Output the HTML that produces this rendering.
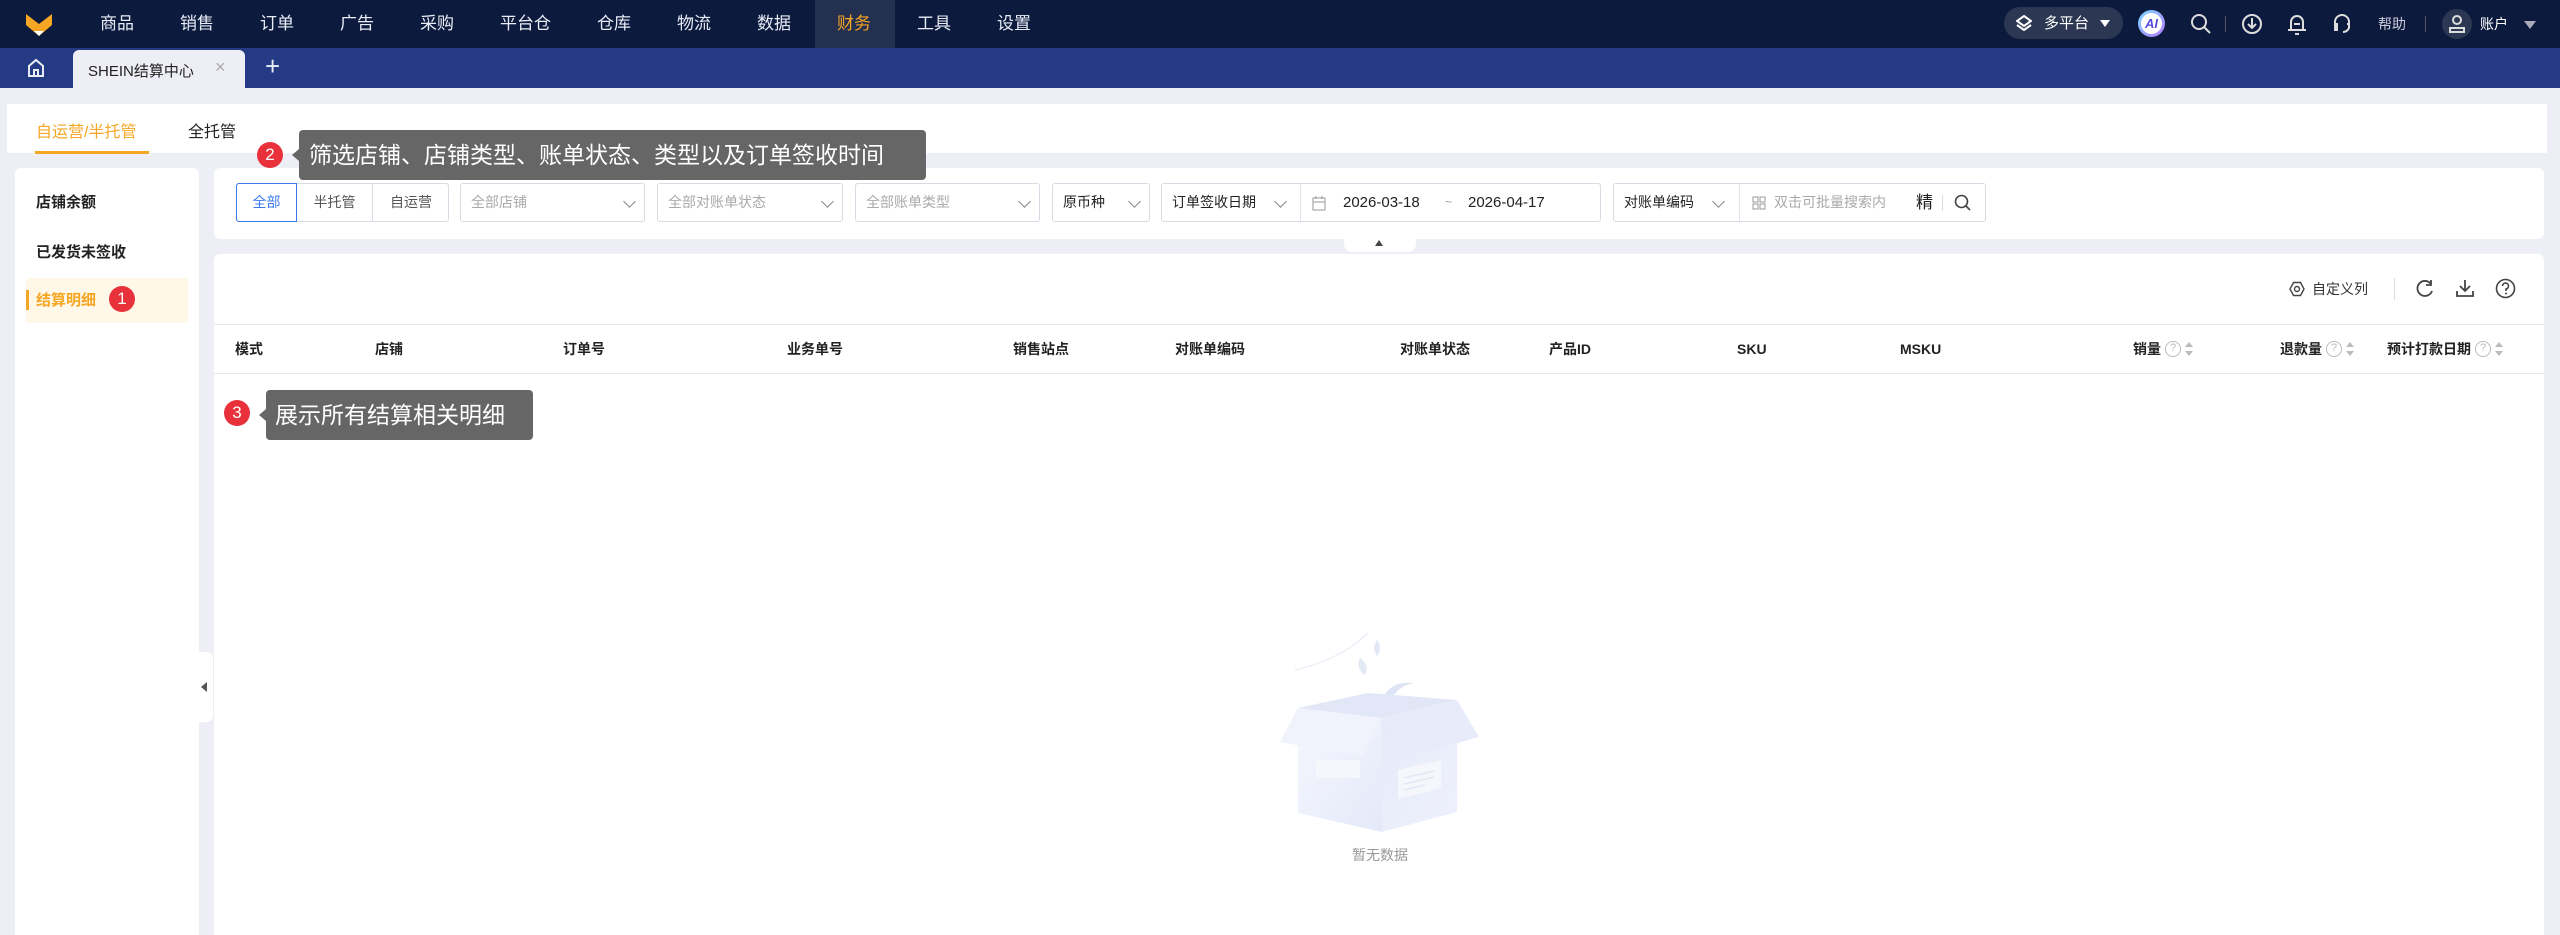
<!DOCTYPE html>
<html><head><meta charset="utf-8">
<style>
*{margin:0;padding:0;box-sizing:border-box}
body{width:2560px;height:935px;overflow:hidden;background:#eeeff6;font-family:"Liberation Sans","Noto Sans CJK SC",sans-serif;position:relative;color:#222}
.a{position:absolute}
.nav{left:0;top:0;width:2560px;height:48px;background:#0c1a3d}
.nav .m{position:absolute;top:0;height:48px;line-height:48px;color:#e8ecf5;font-size:17px}
.tabbar{left:0;top:48px;width:2560px;height:40px;background:#243a85}
.w{background:#fff}
.sel{position:absolute;top:183px;height:39px;border:1px solid #d8dbe3;border-radius:3px;background:#fff;font-size:14px;color:#aaa;line-height:37px;padding-left:10px}
.chev{position:absolute;right:10px;top:13px;width:9px;height:9px;border-right:1.5px solid #888;border-bottom:1.5px solid #888;transform:rotate(45deg)}
.th{position:absolute;top:340px;font-size:14px;font-weight:bold;color:#222;line-height:18px;display:flex;align-items:center}
.tip{position:absolute;background:#666;color:#fff;border-radius:4px;font-size:23px}
.badge{position:absolute;width:26px;height:26px;border-radius:50%;background:#e8313a;color:#fff;text-align:center;line-height:26px;font-size:17px}
.q{display:inline-block;width:16px;height:16px;border:1.5px solid #bbb;border-radius:50%;color:#bbb;font-size:11px;line-height:13px;text-align:center;font-weight:normal;margin-left:4px}
.sort{display:inline-block;width:8px;margin-left:4px}
</style></head><body>
<div class="a nav">
 <svg class="a" style="left:24px;top:11px" width="30" height="26" viewBox="0 0 30 26"><path d="M2 2 L15 12 L28 2 L28 14 L15 25 L2 14Z" fill="#f5a623"/><path d="M10 20 L15 25 L20 20Z" fill="#fff"/><path d="M2 2 L15 12 L28 2" stroke="#0c1a3d" stroke-width="1.5" fill="none"/></svg>
 <div class="m" style="left:100px">商品</div>
 <div class="m" style="left:180px">销售</div>
 <div class="m" style="left:260px">订单</div>
 <div class="m" style="left:340px">广告</div>
 <div class="m" style="left:420px">采购</div>
 <div class="m" style="left:500px">平台仓</div>
 <div class="m" style="left:597px">仓库</div>
 <div class="m" style="left:677px">物流</div>
 <div class="m" style="left:757px">数据</div>
 <div class="a" style="left:815px;top:0;width:80px;height:48px;background:#24304f"></div>
 <div class="m" style="left:837px;color:#f5a623">财务</div>
 <div class="m" style="left:917px">工具</div>
 <div class="m" style="left:997px">设置</div>
 <div class="a" style="left:2004px;top:7px;width:119px;height:32px;border-radius:16px;background:#2b3753"></div>
 <svg class="a" style="left:2016px;top:15px" width="16" height="16" viewBox="0 0 16 16"><path d="M8 1 L15 6 L8 11 L1 6Z M1 10 L8 15 L15 10" stroke="#fff" stroke-width="2" fill="none"/></svg>
 <div class="a" style="left:2044px;top:12px;color:#fff;font-size:15px">多平台</div>
 <div class="a" style="left:2100px;top:20px;border-left:5px solid transparent;border-right:5px solid transparent;border-top:7px solid #fff"></div>
 <div class="a" style="left:2138px;top:10px;width:27px;height:27px;border-radius:50%;background:linear-gradient(135deg,#7bd8ff,#b37bff);"></div>
 <div class="a" style="left:2141px;top:13px;width:21px;height:21px;border-radius:50%;background:#fff;color:#5a4be0;font-size:13px;font-weight:bold;text-align:center;line-height:21px;font-style:italic">AI</div>
 <svg class="a" style="left:2190px;top:13px" width="22" height="22" viewBox="0 0 22 22"><circle cx="9" cy="9" r="7" stroke="#ddd" stroke-width="2" fill="none"/><path d="M14 14 L20 20" stroke="#ddd" stroke-width="2"/></svg>
 <div class="a" style="left:2225px;top:16px;width:1px;height:16px;background:#556"></div>
 <svg class="a" style="left:2241px;top:13px" width="22" height="22" viewBox="0 0 22 22"><circle cx="11" cy="11" r="9" stroke="#ddd" stroke-width="2" fill="none"/><path d="M11 5 V15 M7 11 L11 15 L15 11" stroke="#ddd" stroke-width="2" fill="none"/></svg>
 <svg class="a" style="left:2286px;top:12px" width="22" height="24" viewBox="0 0 22 24"><path d="M5 18 V10 A6 6 0 0 1 17 10 V18 M2 18 H20 M9 22 H13 M8 12 H14" stroke="#ddd" stroke-width="2" fill="none"/></svg>
 <svg class="a" style="left:2331px;top:12px" width="22" height="24" viewBox="0 0 22 24"><path d="M4 15 V10 A7 7 0 0 1 18 10 V15 M4 12 H6 V18 H4Z M16 12 H18 V16 Q16 20 12 20" stroke="#ddd" stroke-width="2" fill="none"/></svg>
 <div class="a" style="left:2378px;top:14px;color:#ccd;font-size:14px">帮助</div>
 <div class="a" style="left:2425px;top:16px;width:1px;height:16px;background:#556"></div>
 <div class="a" style="left:2442px;top:9px;width:30px;height:30px;border-radius:50%;background:#2b3753"></div>
 <svg class="a" style="left:2448px;top:14px" width="18" height="20" viewBox="0 0 18 20"><circle cx="9" cy="6" r="4" stroke="#ddd" stroke-width="2" fill="none"/><path d="M2 18 V14 H16 V18Z" stroke="#ddd" stroke-width="2" fill="none"/></svg>
 <div class="a" style="left:2480px;top:14px;color:#fff;font-size:14px">账户</div>
 <div class="a" style="left:2524px;top:21px;border-left:6px solid transparent;border-right:6px solid transparent;border-top:8px solid #aab"></div>
</div>
<div class="a tabbar">
 <svg class="a" style="left:27px;top:10px" width="18" height="20" viewBox="0 0 18 20"><path d="M2 18 V8 L9 2 L16 8 V18Z M7 18 V12 H11 V18" stroke="#e8ecf5" stroke-width="2" fill="none"/></svg>
 <div class="a" style="left:73px;top:2px;width:172px;height:38px;background:#eeeff6;border-radius:6px 6px 0 0"></div>
 <div class="a" style="left:88px;top:12px;font-size:15px;color:#222">SHEIN结算中心</div>
 <div class="a" style="left:215px;top:9px;font-size:18px;color:#aaa">×</div>
 <div class="a" style="left:265px;top:3px;font-size:26px;color:#e8ecf5;font-weight:300">+</div>
</div>
<div class="a w" style="left:7px;top:104px;width:2540px;height:49px"></div>
<div class="a" style="left:36px;top:118px;font-size:16px;color:#f5a623">自运营/半托管</div>
<div class="a" style="left:35px;top:151px;width:114px;height:3px;background:#f5a623"></div>
<div class="a" style="left:188px;top:118px;font-size:16px;color:#222">全托管</div>
<div class="a w" style="left:15px;top:168px;width:184px;height:767px;border-radius:6px 6px 0 0"></div>
<div class="a" style="left:36px;top:191px;font-size:15px;font-weight:bold">店铺余额</div>
<div class="a" style="left:36px;top:241px;font-size:15px;font-weight:bold">已发货未签收</div>
<div class="a" style="left:26px;top:278px;width:162px;height:45px;background:#fff7e8;border-radius:3px"></div>
<div class="a" style="left:26px;top:290px;width:3px;height:20px;background:#f5a623"></div>
<div class="a" style="left:36px;top:289px;font-size:15px;font-weight:bold;color:#f5a623">结算明细</div>
<div class="badge" style="left:109px;top:286px">1</div>
<div class="a w" style="left:199px;top:652px;width:14px;height:70px;border-radius:0 6px 6px 0"></div>
<div class="a" style="left:201px;top:682px;border-top:5px solid transparent;border-bottom:5px solid transparent;border-right:6px solid #555"></div>
<div class="a w" style="left:214px;top:168px;width:2330px;height:71px;border-radius:6px"></div>
<div class="a" style="left:236px;top:183px;width:213px;height:39px;border:1px solid #d8dbe3;border-radius:3px;background:#fff"></div>
<div class="a" style="left:236px;top:183px;width:61px;height:39px;border:1px solid #3a7bf0;border-radius:3px 0 0 3px;color:#3a7bf0;font-size:14px;text-align:center;line-height:37px">全部</div>
<div class="a" style="left:297px;top:184px;width:76px;height:37px;border-right:1px solid #d8dbe3;color:#555;font-size:14px;text-align:center;line-height:37px">半托管</div>
<div class="a" style="left:373px;top:184px;width:76px;height:37px;color:#555;font-size:14px;text-align:center;line-height:37px">自运营</div>
<div class="sel" style="left:460px;width:185px">全部店铺<span class="chev"></span></div>
<div class="sel" style="left:657px;width:186px">全部对账单状态<span class="chev"></span></div>
<div class="sel" style="left:855px;width:185px">全部账单类型<span class="chev"></span></div>
<div class="sel" style="left:1052px;width:98px;color:#222">原币种<span class="chev"></span></div>
<div class="sel" style="left:1161px;width:440px;color:#222">订单签收日期<span class="chev" style="right:auto;left:114px"></span>
 <span class="a" style="left:138px;top:0;width:1px;height:37px;background:#e3e5ea"></span>
 <svg class="a" style="left:150px;top:11px" width="14" height="16" viewBox="0 0 14 16"><rect x="1" y="3" width="12" height="12" stroke="#999" fill="none"/><path d="M1 7 H13 M4 1 V4 M10 1 V4" stroke="#999"/></svg>
 <span class="a" style="left:181px;top:0;font-size:15px">2026-03-18</span>
 <span class="a" style="left:283px;top:0;font-size:12px;color:#999">~</span>
 <span class="a" style="left:306px;top:0;font-size:15px">2026-04-17</span>
</div>
<div class="sel" style="left:1613px;width:373px;color:#222">对账单编码<span class="chev" style="right:auto;left:100px"></span>
 <span class="a" style="left:125px;top:0;width:1px;height:37px;background:#e3e5ea"></span>
 <svg class="a" style="left:138px;top:12px" width="14" height="14" viewBox="0 0 14 14"><rect x="1" y="1" width="5" height="5" stroke="#999" fill="none"/><rect x="8" y="1" width="5" height="5" stroke="#999" fill="none"/><rect x="1" y="8" width="5" height="5" stroke="#999" fill="none"/><rect x="8" y="8" width="5" height="5" stroke="#999" fill="none"/></svg>
 <span class="a" style="left:160px;top:0;color:#aaa;font-size:14px">双击可批量搜索内</span>
 <span class="a" style="left:302px;top:0;color:#222;font-size:17px">精</span>
 <span class="a" style="left:328px;top:11px;width:1px;height:16px;background:#ddd"></span>
 <svg class="a" style="left:340px;top:10px" width="18" height="18" viewBox="0 0 18 18"><circle cx="7.5" cy="7.5" r="6" stroke="#444" stroke-width="1.6" fill="none"/><path d="M12 12 L16 16" stroke="#444" stroke-width="1.6"/></svg>
</div>
<div class="a w" style="left:1344px;top:236px;width:72px;height:16px;border-radius:0 0 8px 8px"></div>
<div class="a" style="left:1375px;top:240px;border-left:4px solid transparent;border-right:4px solid transparent;border-bottom:6px solid #444"></div>
<div class="a w" style="left:214px;top:254px;width:2330px;height:681px;border-radius:6px 6px 0 0"></div>
<svg class="a" style="left:2289px;top:281px" width="16" height="16" viewBox="0 0 16 16"><path d="M4.5 1.5 H11.5 L15 8 L11.5 14.5 H4.5 L1 8Z" stroke="#444" stroke-width="1.4" fill="none"/><circle cx="8" cy="8" r="2.5" stroke="#444" stroke-width="1.4" fill="none"/></svg>
<div class="a" style="left:2312px;top:279px;font-size:14px;color:#333">自定义列</div>
<div class="a" style="left:2394px;top:278px;width:1px;height:22px;background:#ddd"></div>
<svg class="a" style="left:2415px;top:279px" width="20" height="20" viewBox="0 0 20 20"><path d="M16 5 A7.5 7.5 0 1 0 17 12" stroke="#444" stroke-width="1.8" fill="none"/><path d="M16 1 V6 H11" stroke="#444" stroke-width="1.8" fill="none"/></svg>
<svg class="a" style="left:2455px;top:278px" width="20" height="20" viewBox="0 0 20 20"><path d="M10 2 V13 M5 8 L10 13 L15 8 M2 13 V18 H18 V13" stroke="#444" stroke-width="1.8" fill="none"/></svg>
<svg class="a" style="left:2495px;top:278px" width="21" height="21" viewBox="0 0 21 21"><circle cx="10.5" cy="10.5" r="9" stroke="#444" stroke-width="1.6" fill="none"/><path d="M7.5 8 A3 3 0 1 1 11 11 V13" stroke="#444" stroke-width="1.6" fill="none"/><circle cx="11" cy="15.5" r="1" fill="#444"/></svg>
<div class="a" style="left:214px;top:324px;width:2330px;height:1px;background:#e6e8ee"></div>
<div class="a" style="left:214px;top:373px;width:2330px;height:1px;background:#e6e8ee"></div>
<div class="th" style="left:235px">模式</div>
<div class="th" style="left:375px">店铺</div>
<div class="th" style="left:563px">订单号</div>
<div class="th" style="left:787px">业务单号</div>
<div class="th" style="left:1013px">销售站点</div>
<div class="th" style="left:1175px">对账单编码</div>
<div class="th" style="left:1400px">对账单状态</div>
<div class="th" style="left:1549px">产品ID</div>
<div class="th" style="left:1737px">SKU</div>
<div class="th" style="left:1900px">MSKU</div>
<div class="th" style="left:2133px">销量<span class="q">?</span><svg class="sort" width="8" height="16" viewBox="0 0 8 16"><path d="M0 6 L4 1 L8 6Z M0 10 L4 15 L8 10Z" fill="#bbb"/></svg></div>
<div class="th" style="left:2280px">退款量<span class="q">?</span><svg class="sort" width="8" height="16" viewBox="0 0 8 16"><path d="M0 6 L4 1 L8 6Z M0 10 L4 15 L8 10Z" fill="#bbb"/></svg></div>
<div class="th" style="left:2387px">预计打款日期<span class="q">?</span><svg class="sort" width="8" height="16" viewBox="0 0 8 16"><path d="M0 6 L4 1 L8 6Z M0 10 L4 15 L8 10Z" fill="#bbb"/></svg></div>
<svg class="a" style="left:1200px;top:600px" width="300" height="280" viewBox="0 0 300 280">
 <defs><linearGradient id="g" x1="0" y1="0" x2="1" y2="1"><stop offset="0" stop-color="#f5f7fd"/><stop offset="1" stop-color="#e4e9f9"/></linearGradient>
 <linearGradient id="g2" x1="0" y1="0" x2="1" y2="1"><stop offset="0" stop-color="#e6eaf9"/><stop offset="1" stop-color="#eef1fc"/></linearGradient></defs>
 <path d="M95 70 Q140 60 168 33" stroke="#eef0f8" stroke-width="1.5" fill="none"/>
 <path d="M160 58 Q170 65 165 75 Q155 68 160 58Z M177 40 Q183 48 177 56 Q171 48 177 40Z" fill="#e3e8f5"/>
 <path d="M182 100 Q190 80 214 83 Q196 86 190 103Z" fill="#e0e5f5"/>
 <path d="M98 108 L168 93 L257 100 L182 118Z" fill="#e2e7f7"/>
 <path d="M98 140 L182 118 L182 232 L98 213Z" fill="url(#g)"/>
 <path d="M182 118 L257 140 L257 212 L182 232Z" fill="url(#g2)"/>
 <path d="M80 142 L98 108 L182 118 L163 157Z" fill="#f0f2fc"/>
 <path d="M182 118 L257 100 L279 137 L208 157Z" fill="#e8ecfa"/>
 <path d="M198 170 L241 160 L241 188 L198 199Z" fill="#f6f7fd"/>
 <path d="M204 178 L234 171 M204 184 L234 177 M204 190 L225 185" stroke="#e4e8f6" stroke-width="1.5"/>
 <rect x="116" y="160" width="44" height="18" fill="#f6f7fd"/>
</svg>
<div class="a" style="left:1352px;top:845px;font-size:14px;color:#999">暂无数据</div>
<div class="badge" style="left:257px;top:142px">2</div>
<div class="tip" style="left:299px;top:130px;width:627px;height:50px;line-height:50px;padding-left:10px">筛选店铺、店铺类型、账单状态、类型以及订单签收时间</div>
<div class="a" style="left:292px;top:149px;border-top:6px solid transparent;border-bottom:6px solid transparent;border-right:7px solid #666"></div>
<div class="badge" style="left:224px;top:400px">3</div>
<div class="tip" style="left:266px;top:390px;width:267px;height:50px;line-height:50px;padding-left:9px">展示所有结算相关明细</div>
<div class="a" style="left:259px;top:409px;border-top:6px solid transparent;border-bottom:6px solid transparent;border-right:7px solid #666"></div>
</body></html>
